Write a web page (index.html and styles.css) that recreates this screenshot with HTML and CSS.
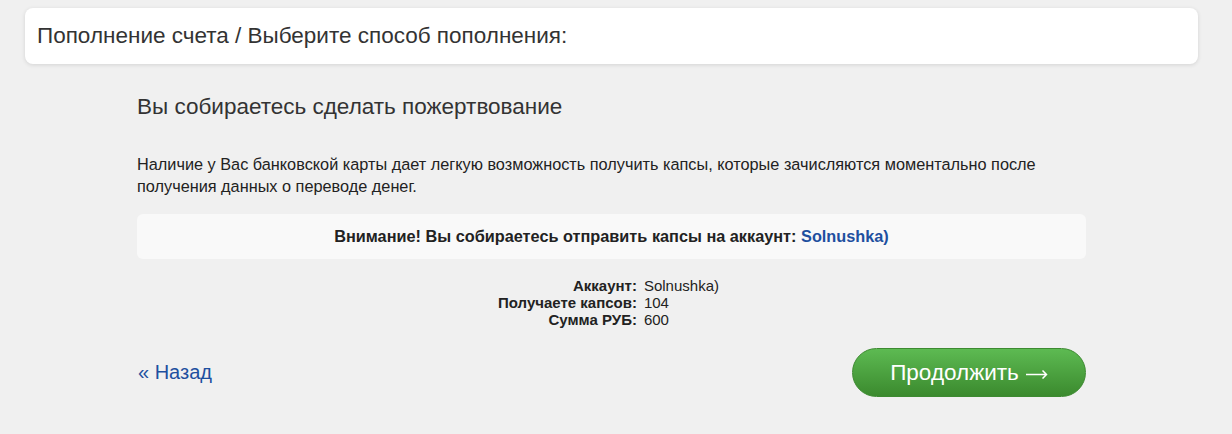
FILE: index.html
```html
<!DOCTYPE html>
<html lang="ru">
<head>
<meta charset="utf-8">
<title>Пополнение счета</title>
<link rel="stylesheet" href="styles.css">
</head>
<body>
<div class="page">
  <div class="header-card">
    <h1 class="header-title">Пополнение счета / Выберите способ пополнения:</h1>
  </div>
  <div class="content">
    <h2 class="title">Вы собираетесь сделать пожертвование</h2>
    <p class="intro">Наличие у Вас банковской карты дает легкую возможность получить капсы, которые зачисляются моментально после получения данных о переводе денег.</p>
    <div class="alert">Внимание! Вы собираетесь отправить капсы на аккаунт:&nbsp;<a class="alert-link" href="#">Solnushka)</a></div>
    <div class="details">
      <div class="label">Аккаунт:</div><div class="value">Solnushka)</div>
      <div class="label">Получаете капсов:</div><div class="value">104</div>
      <div class="label">Сумма РУБ:</div><div class="value">600</div>
    </div>
    <div class="actions">
      <a class="back" href="#">« Назад</a>
      <a class="btn" href="#">Продолжить<svg class="arrow" width="22" height="10" viewBox="0 0 22 10" aria-hidden="true"><path d="M0 5.5H20.5M16.5 1.5L20.5 5.5L16.5 9.5" fill="none" stroke="#fff" stroke-width="1.5"/></svg></a>
    </div>
  </div>
</div>
</body>
</html>
```
FILE: styles.css
```css
* { box-sizing: border-box; }
html, body { margin: 0; padding: 0; }
body {
  background: #f0f0f0;
  font-family: "Liberation Sans", Arial, sans-serif;
  color: #222;
}
.page {
  padding: 8px 34px 0 25px;
}
.header-card {
  background: #fff;
  border-radius: 8px;
  box-shadow: 0 1px 4px rgba(0,0,0,0.12);
  height: 56px;
  display: flex;
  align-items: center;
  padding: 0 12px;
}
.header-title {
  margin: 0;
  font-size: 22.5px;
  font-weight: normal;
  color: #333;
}
.content {
  width: 949px;
  margin: 0 0 0 112px;
  padding-top: 31px;
}
.title {
  margin: 0;
  font-size: 22.5px;
  font-weight: normal;
  color: #333;
  line-height: 24px;
}
.intro {
  margin: 34px 0 0;
  font-size: 16.3px;
  line-height: 22px;
  color: #222;
}
.alert {
  margin-top: 17px;
  height: 45px;
  background: #f9f9f9;
  border-radius: 6px;
  display: flex;
  align-items: center;
  justify-content: center;
  font-size: 16.3px;
  font-weight: bold;
  color: #222;
}
.alert-link {
  color: #1e4f9f;
  text-decoration: none;
}
.details {
  margin-top: 18px;
  display: grid;
  grid-template-columns: auto auto;
  justify-content: center;
  column-gap: 7px;
  font-size: 15px;
  line-height: 17px;
}
.label {
  text-align: right;
  font-weight: bold;
}
.value {
  text-align: left;
  padding-right: 6px;
}
.actions {
  margin-top: 20px;
  display: flex;
  justify-content: space-between;
  align-items: center;
}
.back {
  color: #1e4f9f;
  font-size: 20px;
  text-decoration: none;
  margin-left: 1px;
}
.btn {
  width: 234px;
  height: 49px;
  border-radius: 25px;
  background: linear-gradient(#5dba52, #3b8a2e);
  border: 1px solid #3d8a31;
  color: #fff;
  font-size: 22.5px;
  text-decoration: none;
  display: flex;
  align-items: center;
  justify-content: center;
  gap: 7px;
}
.arrow {
  margin-top: 3px;
}
```
